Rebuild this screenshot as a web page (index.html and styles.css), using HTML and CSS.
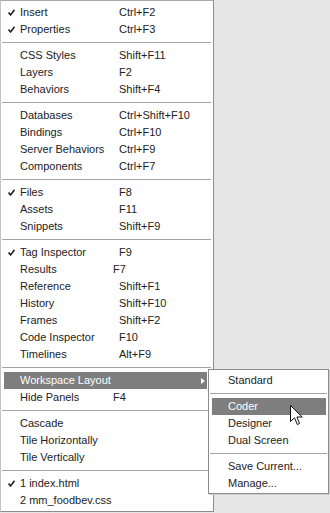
FILE: index.html
```html
<!DOCTYPE html>
<html>
<head>
<meta charset="utf-8">
<link rel="stylesheet" href="styles.css">
</head>
<body>
<div class="screen">
  <div class="menu main">
    <div class="item"><span class="check"><svg width="7" height="7" viewBox="0 0 7 7"><path d="M0.6 3.6 L2.6 5.9 L6.5 0.8" fill="none" stroke="#222" stroke-width="1.6"/></svg></span><span class="label">Insert</span><span class="key">Ctrl+F2</span></div>
    <div class="item"><span class="check"><svg width="7" height="7" viewBox="0 0 7 7"><path d="M0.6 3.6 L2.6 5.9 L6.5 0.8" fill="none" stroke="#222" stroke-width="1.6"/></svg></span><span class="label">Properties</span><span class="key">Ctrl+F3</span></div>
    <div class="sep"></div>
    <div class="item"><span class="check"></span><span class="label">CSS Styles</span><span class="key">Shift+F11</span></div>
    <div class="item"><span class="check"></span><span class="label">Layers</span><span class="key">F2</span></div>
    <div class="item"><span class="check"></span><span class="label">Behaviors</span><span class="key">Shift+F4</span></div>
    <div class="sep"></div>
    <div class="item"><span class="check"></span><span class="label">Databases</span><span class="key">Ctrl+Shift+F10</span></div>
    <div class="item"><span class="check"></span><span class="label">Bindings</span><span class="key">Ctrl+F10</span></div>
    <div class="item"><span class="check"></span><span class="label">Server Behaviors</span><span class="key">Ctrl+F9</span></div>
    <div class="item"><span class="check"></span><span class="label">Components</span><span class="key">Ctrl+F7</span></div>
    <div class="sep"></div>
    <div class="item"><span class="check"><svg width="7" height="7" viewBox="0 0 7 7"><path d="M0.6 3.6 L2.6 5.9 L6.5 0.8" fill="none" stroke="#222" stroke-width="1.6"/></svg></span><span class="label">Files</span><span class="key">F8</span></div>
    <div class="item"><span class="check"></span><span class="label">Assets</span><span class="key">F11</span></div>
    <div class="item"><span class="check"></span><span class="label">Snippets</span><span class="key">Shift+F9</span></div>
    <div class="sep"></div>
    <div class="item"><span class="check"><svg width="7" height="7" viewBox="0 0 7 7"><path d="M0.6 3.6 L2.6 5.9 L6.5 0.8" fill="none" stroke="#222" stroke-width="1.6"/></svg></span><span class="label">Tag Inspector</span><span class="key">F9</span></div>
    <div class="item"><span class="check"></span><span class="label">Results</span><span class="key shifted">F7</span></div>
    <div class="item"><span class="check"></span><span class="label">Reference</span><span class="key">Shift+F1</span></div>
    <div class="item"><span class="check"></span><span class="label">History</span><span class="key">Shift+F10</span></div>
    <div class="item"><span class="check"></span><span class="label">Frames</span><span class="key">Shift+F2</span></div>
    <div class="item"><span class="check"></span><span class="label">Code Inspector</span><span class="key">F10</span></div>
    <div class="item"><span class="check"></span><span class="label">Timelines</span><span class="key">Alt+F9</span></div>
    <div class="sep"></div>
    <div class="item active"><span class="check"></span><span class="label">Workspace Layout</span><span class="key"></span><span class="arrow"></span></div>
    <div class="item"><span class="check"></span><span class="label">Hide Panels</span><span class="key shifted">F4</span></div>
    <div class="sep"></div>
    <div class="item"><span class="check"></span><span class="label">Cascade</span><span class="key"></span></div>
    <div class="item"><span class="check"></span><span class="label">Tile Horizontally</span><span class="key"></span></div>
    <div class="item"><span class="check"></span><span class="label">Tile Vertically</span><span class="key"></span></div>
    <div class="sep"></div>
    <div class="item"><span class="check"><svg width="7" height="7" viewBox="0 0 7 7"><path d="M0.6 3.6 L2.6 5.9 L6.5 0.8" fill="none" stroke="#222" stroke-width="1.6"/></svg></span><span class="label">1 index.html</span><span class="key"></span></div>
    <div class="item"><span class="check"></span><span class="label">2 mm_foodbev.css</span><span class="key"></span></div>
  </div>

  <div class="menu sub">
    <div class="item"><span class="check"></span><span class="label">Standard</span></div>
    <div class="sep"></div>
    <div class="item active"><span class="check"></span><span class="label">Coder</span></div>
    <div class="item"><span class="check"></span><span class="label">Designer</span></div>
    <div class="item"><span class="check"></span><span class="label">Dual Screen</span></div>
    <div class="sep"></div>
    <div class="item"><span class="check"></span><span class="label">Save Current...</span></div>
    <div class="item"><span class="check"></span><span class="label">Manage...</span></div>
  </div>

  <svg class="cursor" width="14" height="22" viewBox="0 0 14 22">
    <path d="M0.5 0.5 L0.5 16.5 L4.5 12.8 L7.3 19.5 L9.6 18.5 L6.9 12 L12.2 12 Z" fill="#fff" stroke="#111" stroke-width="1" stroke-linejoin="miter"/>
  </svg>
</div>
</body>
</html>
```

FILE: styles.css
```css
html, body {
  margin: 0;
  padding: 0;
}

body {
  background: #e6e6e6;
  font-family: "Liberation Sans", Arial, sans-serif;
  font-size: 11px;
  color: #222;
}

.screen {
  position: relative;
  width: 330px;
  height: 513px;
  overflow: hidden;
}

.menu {
  background: #fff;
  box-sizing: border-box;
}

.main {
  width: 214px;
  height: 512px;
  border-top: 1px solid #a8a8a8;
  border-left: 1px solid #c4c4c4;
  border-right: 1px solid #8c8c8c;
  border-bottom: 1px solid #8c8c8c;
  padding: 3px 6px 2px 3px;
}

.item {
  height: 17px;
  display: grid;
  grid-template-columns: 16px 99px 1fr auto;
  align-items: center;
  line-height: 17px;
  white-space: nowrap;
}

.check {
  display: flex;
  align-items: center;
  padding-left: 4px;
  height: 17px;
}

.check svg {
  display: block;
}

.key.shifted {
  margin-left: -6px;
}

.sep {
  height: 9px;
  box-sizing: border-box;
  padding-top: 4px;
  margin: 0 -4px 0 -2px;
}

.sep::before {
  content: "";
  display: block;
  height: 1px;
  background: #a4a4a4;
}

.item.active {
  background: #7e7e7e;
  color: #fff;
}

.arrow {
  width: 0;
  height: 0;
  border-top: 3.5px solid transparent;
  border-bottom: 3.5px solid transparent;
  border-left: 4px solid #fff;
  margin-right: 2px;
}

.sub {
  position: absolute;
  left: 208px;
  top: 369px;
  width: 121px;
  border: 1px solid #8c8c8c;
  padding: 2px 2px 1px 3px;
  box-shadow: 1px 1px 0 #cfcfcf;
}

.sub .item {
  grid-template-columns: 16px 1fr;
}

.sub .sep {
  margin: 0 -1px 0 -2px;
}

.cursor {
  position: absolute;
  left: 290px;
  top: 405px;
}
```
